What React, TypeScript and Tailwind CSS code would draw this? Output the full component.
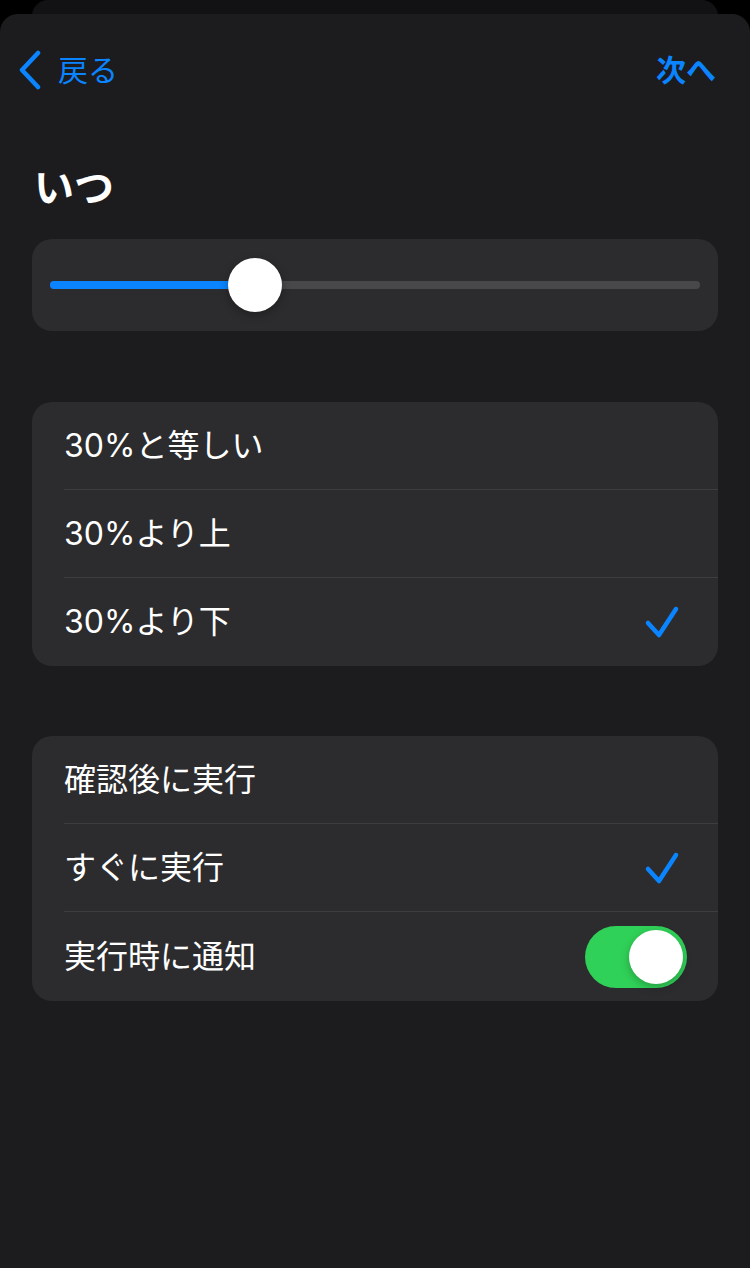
import React from "react";

const font = { fontFamily: '"Inter", "Noto Sans CJK JP", sans-serif' };

function Check() {
  return (
    <svg width="36" height="34" viewBox="0 0 36 34" fill="none" className="mr-[6px]">
      <path d="M4 18 L15 30 L32 4" stroke="#0a84ff" strokeWidth="4.5" strokeLinecap="round" strokeLinejoin="round" />
    </svg>
  );
}

function Row({ label, right, last }: { label: string; right?: React.ReactNode; last?: boolean }) {
  return (
    <div className="flex h-[88px] items-center pl-[32px]">
      <div className={`flex h-full flex-1 items-center pr-[32px] ${last ? "" : "border-b border-[#3d3d41]"}`}>
        <span className="flex-1 text-[32px] leading-none text-white">{label}</span>
        {right}
      </div>
    </div>
  );
}

function Toggle() {
  return (
    <div className="relative mr-[-1px] h-[62px] w-[102px] rounded-full bg-[#30d158]">
      <div className="absolute right-[4px] top-[4px] h-[54px] w-[54px] rounded-full bg-white shadow-[0_3px_8px_rgba(0,0,0,0.25)]" />
    </div>
  );
}

export default function App() {
  return (
    <div className="relative h-[1268px] w-[750px] overflow-hidden bg-black" style={font}>
      <div className="absolute left-[32px] top-0 h-[40px] w-[686px] rounded-t-[16px] bg-[#121214]" />
      <div className="absolute left-0 top-[14px] flex h-[1254px] w-[750px] flex-col rounded-t-[18px] bg-[#1c1c1e]">
        <div className="flex h-[84px] items-center justify-between pl-[18px] pr-[34px] pt-[28px]">
          <div className="flex items-center gap-[16px]">
            <svg width="24" height="40" viewBox="0 0 24 40" fill="none">
              <path d="M20 3 L4 20 L20 37" stroke="#0a84ff" strokeWidth="4.5" strokeLinecap="round" strokeLinejoin="round" />
            </svg>
            <span className="text-[30px] leading-none text-[#0a84ff]">戻る</span>
          </div>
          <span className="text-[30px] font-bold leading-none text-[#0a84ff]">次へ</span>
        </div>
        <div className="px-[32px]">
          <h1 className="mt-[70px] pl-[2px] text-[40px] font-bold leading-none text-white">いつ</h1>
          <div className="mt-[31px] flex h-[92px] items-center rounded-[20px] bg-[#2c2c2e] px-[18px]">
            <div className="relative h-[8px] w-full rounded-full bg-[#48484a]">
              <div className="absolute left-0 top-0 h-[8px] w-[200px] rounded-full bg-[#0a84ff]" />
              <div className="absolute left-[178px] top-[-23px] h-[54px] w-[54px] rounded-full bg-white shadow-[0_3px_10px_rgba(0,0,0,0.3)]" />
            </div>
          </div>
          <div className="mt-[71px] overflow-hidden rounded-[20px] bg-[#2c2c2e]">
            <Row label="30%と等しい" />
            <Row label="30%より上" />
            <Row label="30%より下" right={<Check />} last />
          </div>
          <div className="mt-[70px] overflow-hidden rounded-[20px] bg-[#2c2c2e]">
            <Row label="確認後に実行" />
            <Row label="すぐに実行" right={<Check />} />
            <div className="flex h-[89px] items-center pl-[32px] pr-[32px]">
              <span className="flex-1 text-[32px] leading-none text-white">実行時に通知</span>
              <Toggle />
            </div>
          </div>
        </div>
      </div>
    </div>
  );
}
